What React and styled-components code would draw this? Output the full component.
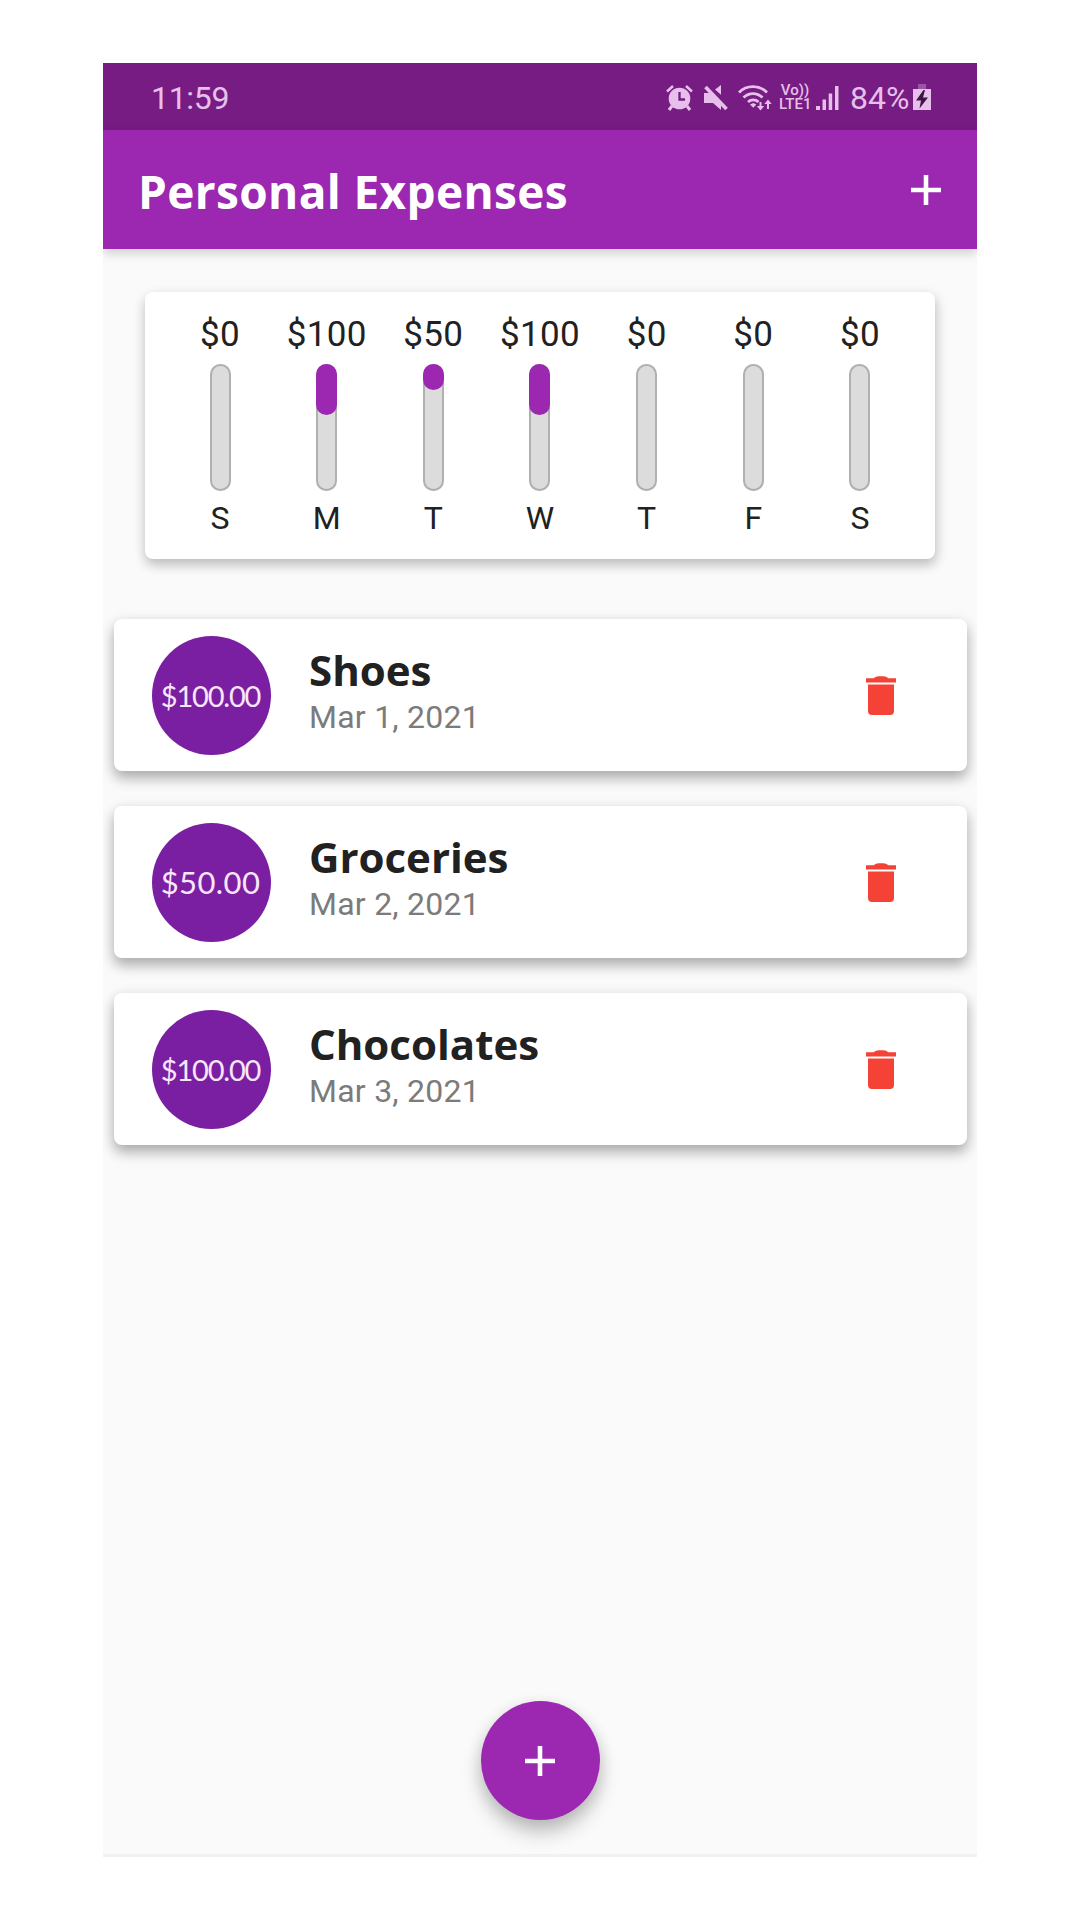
import React from "react";
import styled, { createGlobalStyle } from "styled-components";

const Global = createGlobalStyle`
  * { box-sizing: border-box; }
  body { margin: 0; background: #fff; font-family: Roboto, sans-serif; }
`;

const Page = styled.div`
  height: 1920px;
  padding: 63px 103px 0;
  background: #fff;
`;
const Phone = styled.main`
  height: 1794px;
  display: flex;
  flex-direction: column;
  background: #fafafa;
  border-bottom: 3px solid #f1f1f1;
  overflow: hidden;
`;
const StatusBar = styled.div`
  flex: none;
  height: 67px;
  padding: 2px 46px 0 48px;
  display: flex;
  align-items: center;
  justify-content: space-between;
  background: #761c82;
  color: #e6c0ea;
`;
const Clock = styled.span`
  font-size: 32px;
  letter-spacing: -0.3px;
`;
const StatusIcons = styled.div`
  display: flex;
  align-items: center;
`;
const Glyph = styled.svg`
  display: block;
  flex: none;
  margin-right: ${(p) => p.$gap || 0}px;
`;
const Volte = styled.div`
  width: 32px;
  margin-right: 5px;
  text-align: center;
  font-size: 15px;
  line-height: 13.5px;
  font-weight: 500;
  white-space: pre;
`;
const Percent = styled.span`
  width: 58px;
  margin-right: 5px;
  font-size: 32px;
  white-space: nowrap;
`;
const AppBar = styled.header`
  flex: none;
  height: 119px;
  padding: 0 33px 0 35px;
  display: flex;
  align-items: center;
  justify-content: space-between;
  background: #9c27b0;
  box-shadow: 0 4px 10px rgba(0, 0, 0, 0.18);
`;
const Title = styled.h1`
  margin: 2px 0 0;
  color: #fff;
  font: 700 46px/60px "Open Sans", sans-serif;
  letter-spacing: 0.35px;
`;
const IconButton = styled.button`
  display: flex;
  padding: 0;
  border: 0;
  background: none;
  color: ${(p) => p.$color};
`;
const ChartCard = styled.section`
  flex: none;
  height: 267px;
  margin: 43px 42px 60px;
  padding: 23px 21.7px 0;
  display: grid;
  grid-template-columns: repeat(7, 1fr);
  background: #fff;
  border-radius: 8px;
  box-shadow: 0 6px 12px rgba(0, 0, 0, 0.18), 2px 4px 14px rgba(0, 0, 0, 0.1);
`;
const Day = styled.div`
  display: flex;
  flex-direction: column;
  align-items: center;
  color: #212121;
`;
const Amount = styled.span`
  height: 40px;
  font-size: 35px;
  line-height: 40px;
  letter-spacing: 0.3px;
`;
const Track = styled.div`
  width: 21px;
  height: 127px;
  margin: 9px 0 8px;
  border-radius: 11px;
  background: #dcdcdc;
  box-shadow: inset 0 0 0 2px #b0b0b0;
`;
const Fill = styled.div`
  height: ${(p) => p.$height}px;
  border-radius: 11px;
  background: #9c27b0;
`;
const Letter = styled.span`
  font-size: 32px;
  line-height: 38px;
`;
const List = styled.ul`
  margin: 0 10px 0 11px;
  padding: 0;
  display: flex;
  flex-direction: column;
  gap: 35px;
  list-style: none;
`;
const Item = styled.li`
  height: 152px;
  padding: 0 71px 0 38px;
  display: flex;
  align-items: center;
  background: #fff;
  border-radius: 8px;
  box-shadow: 0 8px 13px rgba(0, 0, 0, 0.24), 0 3px 14px rgba(0, 0, 0, 0.12);
`;
const Price = styled.div`
  flex: none;
  width: 119px;
  height: 119px;
  margin-right: 38px;
  padding: 0 2px 0 0;
  border-radius: 50%;
  display: flex;
  align-items: center;
  justify-content: center;
  background: #7b1fa2;
  color: #f8e6fb;
  font-family: Lato, sans-serif;
  font-size: ${(p) => p.$size}px;
  letter-spacing: ${(p) => p.$tracking}px;
`;
const Details = styled.div`
  flex: 1;
  padding-bottom: 4px;
  display: flex;
  flex-direction: column;
`;
const Name = styled.span`
  color: #212121;
  font: 700 42px/48px "Open Sans", sans-serif;
`;
const When = styled.span`
  color: #7b7b7b;
  font-size: 32px;
  line-height: 46px;
  letter-spacing: 0.25px;
`;
const Fab = styled.button`
  flex: none;
  align-self: center;
  width: 119px;
  height: 119px;
  margin: auto 0 34px;
  padding: 0;
  border: 0;
  border-radius: 50%;
  display: flex;
  align-items: center;
  justify-content: center;
  background: #9c27b0;
  color: #fff;
  box-shadow: 0 13px 20px rgba(0, 0, 0, 0.2), 0 4px 16px rgba(0, 0, 0, 0.12);
`;

const PlusIcon = () => (
  <Glyph width="36" height="36" viewBox="0 0 36 36">
    <path d="M15.7 3h4.6v12.7H33v4.6H20.3V33h-4.6V20.3H3v-4.6h12.7z" fill="currentColor" />
  </Glyph>
);
const TrashIcon = () => (
  <Glyph width="30" height="39" viewBox="0 0 30 39">
    <path d="M2 8.500h26V35a4 4 0 0 1-4 4H6a4 4 0 0 1-4-4zM0 2.300h7.500q2.500-2 5-2h5q2.500 0 5 2H30v4.200H0z" fill="currentColor" />
  </Glyph>
);
const AlarmIcon = () => (
  <Glyph $gap={11} width="27" height="26" viewBox="0 0 27 26" fill="none" stroke="currentColor">
    <circle cx="13.500" cy="13.500" r="10.800" fill="currentColor" stroke="none" />
    <path d="M1 6.500 7 1M26 6.500 20 1" strokeWidth="2.500" />
    <path d="m6 21-3 4M21 21l3 4" strokeWidth="3" />
    <path d="M13.500 7v7.500H19" stroke="#761c82" strokeWidth="2.300" />
  </Glyph>
);
const MuteIcon = () => (
  <Glyph $gap={10} width="24" height="26" viewBox="0 0 24 26" fill="currentColor">
    <path d="M0 8h6.500L17 18v7l-8-7H0zM11 4.500 17 0v9.800z" />
    <path d="M1.500 2 22.500 24" stroke="currentColor" strokeWidth="3.600" />
  </Glyph>
);
const WifiIcon = () => (
  <Glyph $gap={7} width="34" height="26" viewBox="0 0 34 26" fill="none" stroke="currentColor" strokeWidth="2.800">
    <path d="M1 7.500C8.500-.3 21.500-.3 29 7.500M5.500 12.500c5.500-5.300 13.500-5.300 19 0M10 17c3-2.800 7.500-2.800 10.500 0" />
    <path d="m12 19.500 3.300-1.500 3 1.500-3 3.200z" fill="currentColor" stroke="none" />
    <path d="M22.500 17v6M30 24v-7" strokeWidth="2" />
    <path d="m18.800 21 3.700 4.500 3.700-4.500zM26.300 19l3.700-4.500 3.700 4.500z" fill="currentColor" stroke="none" />
  </Glyph>
);
const SignalIcon = () => (
  <Glyph $gap={11} width="23" height="26" viewBox="0 0 23 26" fill="currentColor">
    <path d="M0 21h4v4H0zM6.500 14.500H10V25H6.500zM12.700 8.500h3.500V25h-3.500zM19 1h3.500v24H19z" />
  </Glyph>
);
const BatteryIcon = () => (
  <Glyph width="18" height="27" viewBox="0 0 18 27">
    <path d="M5 0h8v5H5z" fill="#9a55a4" />
    <path d="M0 5h18v21H0z" fill="currentColor" />
    <path d="M10.500 6 3 16.500h5l-1.500 8L15 13.500h-5L12 6z" fill="#3d1645" />
  </Glyph>
);

const week = [
  ["S", 0, 0],
  ["M", 100, 51],
  ["T", 50, 26],
  ["W", 100, 51],
  ["T", 0, 0],
  ["F", 0, 0],
  ["S", 0, 0],
];
const expenses = [
  { name: "Shoes", date: "Mar 1, 2021", price: "$100.00", size: 29, tracking: -1.2 },
  { name: "Groceries", date: "Mar 2, 2021", price: "$50.00", size: 31, tracking: 0.4 },
  { name: "Chocolates", date: "Mar 3, 2021", price: "$100.00", size: 29, tracking: -1.2 },
];

export default function App() {
  return (
    <Page>
      <Global />
      <Phone>
        <StatusBar>
          <Clock>11:59</Clock>
          <StatusIcons>
            <AlarmIcon />
            <MuteIcon />
            <WifiIcon />
            <Volte>{"Vo))\nLTE1"}</Volte>
            <SignalIcon />
            <Percent>84%</Percent>
            <BatteryIcon />
          </StatusIcons>
        </StatusBar>
        <AppBar>
          <Title>Personal Expenses</Title>
          <IconButton $color="#fff" aria-label="Add expense">
            <PlusIcon />
          </IconButton>
        </AppBar>
        <ChartCard>
          {week.map(([letter, amount, height], i) => (
            <Day key={i}>
              <Amount>${amount}</Amount>
              <Track>{height > 0 && <Fill $height={height} />}</Track>
              <Letter>{letter}</Letter>
            </Day>
          ))}
        </ChartCard>
        <List>
          {expenses.map((e) => (
            <Item key={e.name}>
              <Price $size={e.size} $tracking={e.tracking}>{e.price}</Price>
              <Details>
                <Name>{e.name}</Name>
                <When>{e.date}</When>
              </Details>
              <IconButton $color="#f44336" aria-label={`Delete ${e.name}`}>
                <TrashIcon />
              </IconButton>
            </Item>
          ))}
        </List>
        <Fab aria-label="Add expense">
          <PlusIcon />
        </Fab>
      </Phone>
    </Page>
  );
}
